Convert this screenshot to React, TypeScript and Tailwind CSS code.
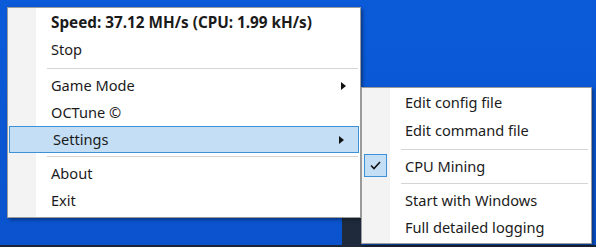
import React from 'react';

const font = { fontFamily: '"Noto Sans", "Open Sans", sans-serif' };

function Arrow() {
  return (
    <svg width="5" height="8" viewBox="0 0 5 8" className="absolute right-[14px] top-1/2 -translate-y-1/2">
      <path d="M0 0 L5 4 L0 8 Z" fill="#111" />
    </svg>
  );
}

function Item({
  label,
  bold,
  arrow,
  active,
  h = 'h-[28px]',
}: {
  label: string;
  bold?: boolean;
  arrow?: boolean;
  active?: boolean;
  h?: string;
}) {
  return (
    <div
      className={`relative flex items-center ${h} pl-[43px] text-[#1b1b1b] ${
        bold ? 'font-bold text-[15.3px]' : 'text-[14.6px]'
      } ${active ? 'bg-[#c4def5] border border-[#3c91d8] mx-px pl-[41px]' : ''}`}
    >
      {label}
      {arrow && <Arrow />}
    </div>
  );
}

function Sep({ h = 'h-[8px]', right = 'mr-[2px]' }: { h?: string; right?: string }) {
  return (
    <div className={`flex items-center ${h} pl-[39px] ${right}`}>
      <div className="h-px w-full bg-[#d5d5d5]" />
    </div>
  );
}

export default function App() {
  return (
    <div className="relative flex h-[247px] w-[596px] flex-col overflow-hidden" style={font}>
      <div className="flex-1 bg-gradient-to-b from-[#0b5bd9] to-[#0a53cd]" />
      <div className="h-[2px] bg-[#1c2535]" />

      {/* desktop icon peeking under menus */}
      <div className="absolute left-[342px] top-[217px] h-[30px] w-[20px] bg-[#1f2b3d]" />

      {/* main menu */}
      <div className="absolute left-[7px] top-[7px] h-[211px] w-[354px] border border-[#9c9c9c] bg-white shadow-[2px_2px_3px_rgba(0,0,0,0.35)]">
        <div className="absolute bottom-0 left-0 top-0 w-[28px] bg-[#f3f3f3]" />
        <div className="relative flex flex-col">
          <Item label="Speed: 37.12 MH/s (CPU: 1.99 kH/s)" bold />
          <Item label="Stop" />
          <Sep />
          <Item label="Game Mode" arrow h="h-[27px]" />
          <Item label="OCTune ©" h="h-[27px]" />
          <Item label="Settings" arrow active h="h-[27px]" />
          <Sep h="h-[7px]" />
          <Item label="About" h="h-[27px]" />
          <Item label="Exit" h="h-[27px]" />
        </div>
      </div>

      {/* settings submenu */}
      <div className="absolute left-[361px] top-[87px] h-[157px] w-[231px] border border-[#9c9c9c] bg-white shadow-[2px_2px_3px_rgba(0,0,0,0.35)]">
        <div className="absolute bottom-0 left-0 top-0 w-[28px] bg-[#f3f3f3]" />
        <div className="relative flex flex-col pt-px">
          <Item label="Edit config file" />
          <Item label="Edit command file" />
          <Sep right="mr-[3px]" />
          <div className="relative flex h-[27px] items-center pl-[43px] text-[14.6px] text-[#1b1b1b]">
            <div className="absolute left-[2px] top-[1px] flex h-[23px] w-[23px] items-center justify-center border border-[#3c91d8] bg-[#c4def5]">
              <svg width="11" height="9" viewBox="0 0 11 9">
                <path d="M1 4.5 L4 7.5 L10 1" fill="none" stroke="#111" strokeWidth="1.6" />
              </svg>
            </div>
            CPU Mining
          </div>
          <Sep h="h-[7px]" right="mr-[3px]" />
          <Item label="Start with Windows" h="h-[27px]" />
          <Item label="Full detailed logging" h="h-[27px]" />
        </div>
      </div>
    </div>
  );
}
